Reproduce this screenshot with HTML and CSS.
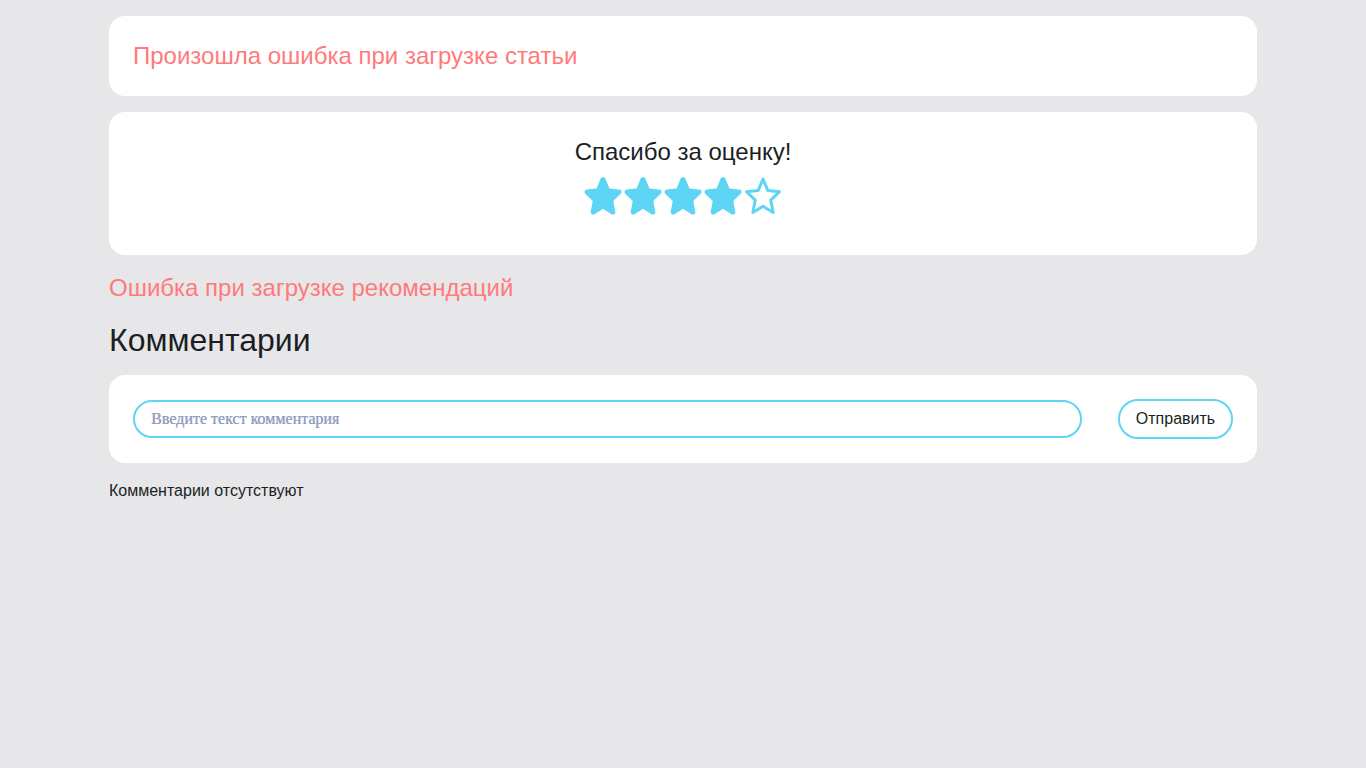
FILE: index.html
```html
<!DOCTYPE html>
<html lang="ru">
<head>
<meta charset="utf-8">
<link rel="stylesheet" href="styles.css">
</head>
<body>
<main class="page">
  <section class="card card-error">
    <p class="error-text">Произошла ошибка при загрузке статьи</p>
  </section>
  <section class="card card-rating">
    <p class="rating-title">Спасибо за оценку!</p>
    <div class="stars">
      <svg class="star" viewBox="0 0 40 40"><path class="filled" d="M20 3.5L24.64 14.66 35.98 15.95 27.51 24.11 29.87 36.04 20 29.95 10.13 36.04 12.49 24.11 4.02 15.95 15.36 14.66Z"/></svg>
      <svg class="star" viewBox="0 0 40 40"><path class="filled" d="M20 3.5L24.64 14.66 35.98 15.95 27.51 24.11 29.87 36.04 20 29.95 10.13 36.04 12.49 24.11 4.02 15.95 15.36 14.66Z"/></svg>
      <svg class="star" viewBox="0 0 40 40"><path class="filled" d="M20 3.5L24.64 14.66 35.98 15.95 27.51 24.11 29.87 36.04 20 29.95 10.13 36.04 12.49 24.11 4.02 15.95 15.36 14.66Z"/></svg>
      <svg class="star" viewBox="0 0 40 40"><path class="filled" d="M20 3.5L24.64 14.66 35.98 15.95 27.51 24.11 29.87 36.04 20 29.95 10.13 36.04 12.49 24.11 4.02 15.95 15.36 14.66Z"/></svg>
      <svg class="star" viewBox="0 0 40 40"><path class="empty" d="M20 2.96L24.78 14.45 36.46 15.78 27.74 24.19 30.17 36.48 20 30.2 9.83 36.48 12.26 24.19 3.54 15.78 15.22 14.45Z"/></svg>
    </div>
  </section>
  <p class="rec-error">Ошибка при загрузке рекомендаций</p>
  <h2 class="comments-title">Комментарии</h2>
  <section class="card card-form">
    <input class="comment-input" type="text" placeholder="Введите текст комментария">
    <button class="send-btn" type="button">Отправить</button>
  </section>
  <p class="no-comments">Комментарии отсутствуют</p>
</main>
</body>
</html>
```
FILE: styles.css
```css
html, body {
  margin: 0;
  padding: 0;
}
body {
  background: #e7e7e9;
  font-family: "Liberation Sans", Arial, sans-serif;
  color: #1b1f23;
}
.page {
  width: 1148px;
  margin: 0 auto;
  padding-top: 16px;
  display: flex;
  flex-direction: column;
}
.card {
  background: #ffffff;
  border-radius: 16px;
  box-sizing: border-box;
}
.card-error {
  height: 80px;
  padding: 0 24px;
  display: flex;
  align-items: center;
}
.error-text {
  margin: 0;
  font-size: 24px;
  line-height: 28px;
  color: #ff7a7a;
}
.card-rating {
  margin-top: 16px;
  height: 143px;
  padding-top: 26px;
  display: flex;
  flex-direction: column;
  align-items: center;
}
.rating-title {
  margin: 0;
  font-size: 24px;
  line-height: 28px;
}
.stars {
  display: flex;
  margin-top: 10px;
}
.star {
  width: 40px;
  height: 40px;
  display: block;
}
.star path {
  stroke: #5ed5f5;
  stroke-linejoin: round;
}
.star .filled {
  fill: #5ed5f5;
  stroke-width: 5;
}
.star .empty {
  fill: none;
  stroke-width: 3;
}
.rec-error {
  margin: 17px 0 0;
  font-size: 24px;
  line-height: 32px;
  color: #ff7a7a;
}
.comments-title {
  margin: 16px 0 0;
  font-size: 32px;
  font-weight: 400;
  line-height: 40px;
}
.card-form {
  margin-top: 15px;
  height: 88px;
  padding: 0 24px;
  display: flex;
  align-items: center;
  gap: 36px;
}
.comment-input {
  flex: 1;
  height: 38px;
  box-sizing: border-box;
  border: 2px solid #5ed5f5;
  border-radius: 19px;
  padding: 0 16px;
  font-family: "Liberation Serif", serif;
  font-size: 16px;
  outline: none;
  background: #fff;
}
.comment-input::placeholder {
  color: #8c9cbc;
  text-shadow: 0.5px 0 0 rgba(140, 156, 188, 0.7);
}
.send-btn {
  width: 115px;
  height: 40px;
  box-sizing: border-box;
  border: 2px solid #5ed5f5;
  border-radius: 20px;
  background: #fff;
  font-family: "Liberation Sans", Arial, sans-serif;
  font-size: 16px;
  color: #1b1f23;
  padding: 0;
}
.no-comments {
  margin: 17px 0 0;
  font-size: 16px;
  line-height: 22px;
}
```
